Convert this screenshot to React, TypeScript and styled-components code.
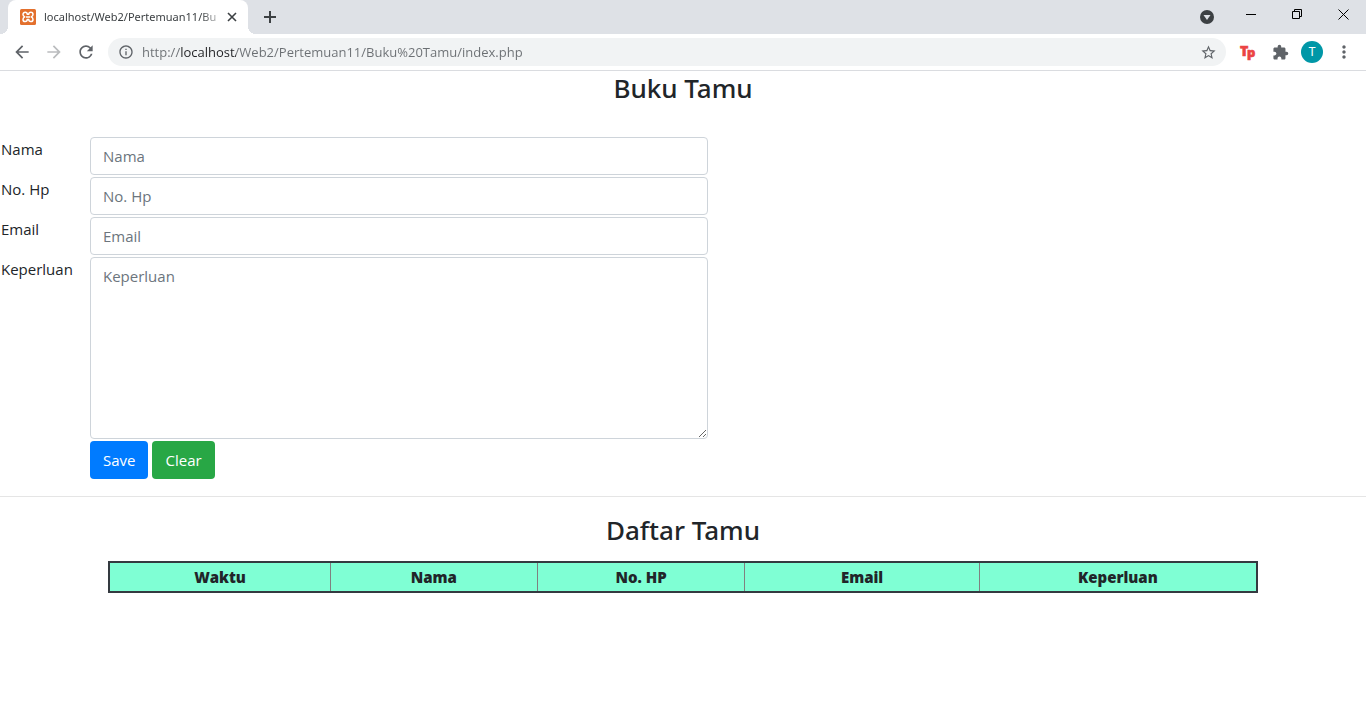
import React from "react";
import styled, { createGlobalStyle } from "styled-components";
import {
  MdArrowBack,
  MdArrowForward,
  MdRefresh,
  MdInfoOutline,
  MdStarBorder,
  MdExtension,
  MdMoreVert,
} from "react-icons/md";

const GlobalStyle = createGlobalStyle`
  *, *::before, *::after { box-sizing: border-box; }
  body {
    margin: 0;
    background: #fff;
    color: #212529;
    font-family: "Open Sans", "Noto Sans", sans-serif;
    font-size: 15px;
    line-height: 24px;
  }
`;

/* Browser frame */

const TabStrip = styled.div`
  display: flex;
  align-items: center;
  height: 34px;
  padding-left: 8px;
  background: #dee1e6;
`;

const Tab = styled.div`
  position: relative;
  display: flex;
  align-items: center;
  align-self: stretch;
  width: 240px;
  padding: 0 10px 0 12px;
  background: #fff;
  border-radius: 8px 8px 0 0;

  &::before,
  &::after {
    content: "";
    position: absolute;
    bottom: 0;
    width: 8px;
    height: 8px;
  }
  &::before {
    right: 100%;
    background: radial-gradient(circle at 0 0, #dee1e6 8px, #fff 8px);
  }
  &::after {
    left: 100%;
    background: radial-gradient(circle at 100% 0, #dee1e6 8px, #fff 8px);
  }
`;

const TabTitle = styled.span`
  flex: 1;
  min-width: 0;
  margin-left: 8px;
  white-space: nowrap;
  font-family: "Noto Sans", "Open Sans", sans-serif;
  font-size: 11px;
  line-height: 16px;
  color: #3c4043;
  mask-image: linear-gradient(to right, #000 86%, transparent);
`;

const IconButton = styled.button<{ $size?: number; $color?: string }>`
  display: flex;
  align-items: center;
  justify-content: center;
  flex: none;
  width: ${(p) => p.$size ?? 32}px;
  height: ${(p) => Math.min(p.$size ?? 32, 32)}px;
  padding: 0;
  border: 0;
  background: none;
  color: ${(p) => p.$color ?? "#5f6368"};
`;

const NewTab = styled(IconButton)`
  margin-left: 6px;
`;

const WindowControls = styled.div`
  display: flex;
  align-items: center;
  height: 28px;
  margin: 0 0 auto auto;
`;

const Toolbar = styled.div`
  display: flex;
  align-items: center;
  height: 37px;
  padding: 0 6px;
  border-bottom: 1px solid #dadce0;
  background: #fff;
`;

const AddressBar = styled.div`
  display: flex;
  align-items: center;
  flex: 1;
  height: 28px;
  margin: 0 6px;
  padding: 0 2px 0 10px;
  border-radius: 14px;
  background: #f1f3f4;
  color: #5f6368;
`;

const Address = styled.input`
  flex: 1;
  min-width: 0;
  height: 20px;
  margin-left: 8px;
  padding: 0;
  border: 0;
  outline: 0;
  font: 13px/20px "Open Sans", "Noto Sans", sans-serif;
  color: #5f6368;
  /* the host name is darker than the rest of the address */
  background: linear-gradient(to right, #6b6f73 38px, #202124 38px 94px, #6b6f73 94px);
  background-clip: text;
  -webkit-text-fill-color: transparent;
`;

const Avatar = styled.span`
  width: 22px;
  height: 22px;
  border-radius: 50%;
  background: #0097a7;
  color: #fff;
  font: 12px/22px Roboto, sans-serif;
  text-align: center;
`;

/* Page */

const Heading = styled.h3`
  margin: 0;
  font-family: "Noto Sans", "Open Sans", sans-serif;
  font-size: 26px;
  font-weight: 500;
  line-height: 34px;
  text-align: center;
`;

const GuestForm = styled.form`
  display: grid;
  grid-template-columns: 88px 1fr;
  gap: 2px 1px;
  max-width: 709px;
  margin-top: 32px;
  padding: 0 1px;
`;

const Label = styled.label`
  font-size: 15px;
`;

const fieldStyle = `
  display: block;
  width: 100%;
  padding: 6px 12px;
  border: 1px solid #ced4da;
  border-radius: 4px;
  background: #fff;
  color: #495057;
  font: 15px/24px "Open Sans", "Noto Sans", sans-serif;
  &::placeholder { color: #6c757d; opacity: 1; }
`;

const Field = styled.input`
  ${fieldStyle}
  height: 38px;
`;

const Area = styled.textarea`
  ${fieldStyle}
  height: 182px;
  resize: vertical;
`;

const Actions = styled.div`
  display: flex;
  grid-column: 2;
  gap: 4px;
`;

const Button = styled.button<{ $color: string }>`
  height: 38px;
  padding: 0 13px;
  border: 0;
  border-radius: 4px;
  background: ${(p) => p.$color};
  color: #fff;
  font: 15px/24px "Open Sans", "Noto Sans", sans-serif;
`;

const Divider = styled.hr`
  margin: 17px 0 16px;
  border: 0;
  border-top: 1px solid #e5e5e5;
`;

const GuestTable = styled.table`
  width: 100%;
  max-width: 1150px;
  margin: 14px auto 0;
  border: 2px solid #343a40;
  border-collapse: collapse;
  table-layout: fixed;
  background: #7fffd4;
`;

const HeadCell = styled.th<{ $share: number }>`
  width: ${(p) => p.$share}%;
  height: 30px;
  padding: 2px;
  border: 1px solid #808080;
  border-width: 0 1px;
  font-size: 15px;
  font-weight: 800;
  text-align: center;
`;

const fields = [
  { id: "nama", label: "Nama" },
  { id: "hp", label: "No. Hp" },
  { id: "email", label: "Email" },
];

const columns = [
  { title: "Waktu", share: 19.3 },
  { title: "Nama", share: 18 },
  { title: "No. HP", share: 18.1 },
  { title: "Email", share: 20.4 },
  { title: "Keperluan", share: 24.2 },
];

const XamppIcon = () => (
  <svg width="16" height="16" viewBox="0 0 16 16" fill="none">
    <rect width="16" height="16" rx="1.500" fill="#e3702d" />
    <path
      d="M4.800 7.900C3.400 7.300 3 6.500 3 5.500 3 4 4 3.300 5.200 3.300S7.200 4 7.200 5.200H8.800C8.800 4 9.600 3.300 10.800 3.300S13 4 13 5.500c0 1-.4 1.800-1.800 2.400C12.600 8.500 13 9.400 13 10.400c0 1.400-1 2.200-2.200 2.200S8.800 11.800 8.800 10.600H7.200C7.200 11.800 6.400 12.600 5.200 12.600S3 11.800 3 10.400C3 9.400 3.400 8.500 4.800 7.900ZM6 7.900h4"
      stroke="#fff"
      strokeWidth="1.500"
      strokeLinejoin="round"
    />
  </svg>
);

const TpIcon = () => (
  <svg
    width="20"
    height="24"
    fill="#eb4444"
    stroke="#eb4444"
    strokeWidth="0.600"
    fontFamily="Open Sans, sans-serif"
    fontWeight="800"
  >
    <text x="2" y="16" fontSize="14">T</text>
    <text x="9" y="17" fontSize="13">p</text>
  </svg>
);

export default function App() {
  return (
    <>
      <GlobalStyle />
      <header>
        <TabStrip>
          <Tab>
            <XamppIcon />
            <TabTitle>localhost/Web2/Pertemuan11/Bu</TabTitle>
            <IconButton $size={12} $color="#3c4043" aria-label="Close tab">
              <svg width="10" height="10" stroke="currentColor" strokeWidth="1.600">
                <path d="M1 1l8 8M9 1L1 9" />
              </svg>
            </IconButton>
          </Tab>
          <NewTab $color="#3c4043" aria-label="New tab">
            <svg width="12" height="12" stroke="currentColor" strokeWidth="2">
              <path d="M6 0v12M0 6h12" />
            </svg>
          </NewTab>
          <WindowControls>
            <IconButton $size={42} aria-label="Search tabs">
              <svg width="14" height="20">
                <circle cx="7" cy="13" r="7" fill="#3c4043" />
                <path d="M3.500 11h7L7 16z" fill="#dee1e6" />
              </svg>
            </IconButton>
            <IconButton $size={46} $color="#000" aria-label="Minimize">
              <svg width="10" height="10" stroke="currentColor">
                <path d="M0 5.500h10" />
              </svg>
            </IconButton>
            <IconButton $size={46} $color="#000" aria-label="Restore">
              <svg width="10" height="10" fill="none" stroke="currentColor">
                <path d="M.5 2.500h7v7h-7zM2.500 2.500v-2h7v7h-2" />
              </svg>
            </IconButton>
            <IconButton $size={46} $color="#000" aria-label="Close">
              <svg width="11" height="11" stroke="currentColor">
                <path d="M.5.5l10 10M10.500.5l-10 10" />
              </svg>
            </IconButton>
          </WindowControls>
        </TabStrip>
        <Toolbar>
          <IconButton aria-label="Back"><MdArrowBack size={20} /></IconButton>
          <IconButton $color="#babcbe" aria-label="Forward"><MdArrowForward size={20} /></IconButton>
          <IconButton aria-label="Reload"><MdRefresh size={20} /></IconButton>
          <AddressBar>
            <MdInfoOutline size={16} />
            <Address
              aria-label="Address"
              defaultValue="http://localhost/Web2/Pertemuan11/Buku%20Tamu/index.php"
            />
            <IconButton aria-label="Bookmark"><MdStarBorder size={17} /></IconButton>
          </AddressBar>
          <IconButton aria-label="Extension"><TpIcon /></IconButton>
          <IconButton aria-label="Extensions"><MdExtension size={17} /></IconButton>
          <IconButton aria-label="Profile"><Avatar>T</Avatar></IconButton>
          <IconButton aria-label="Menu"><MdMoreVert size={20} /></IconButton>
        </Toolbar>
      </header>
      <main>
        <Heading>Buku Tamu</Heading>
        <GuestForm>
          {fields.map((f) => (
            <React.Fragment key={f.id}>
              <Label htmlFor={f.id}>{f.label}</Label>
              <Field id={f.id} placeholder={f.label} />
            </React.Fragment>
          ))}
          <Label htmlFor="keperluan">Keperluan</Label>
          <Area id="keperluan" placeholder="Keperluan" />
          <Actions>
            <Button type="submit" $color="#007bff">Save</Button>
            <Button type="reset" $color="#28a745">Clear</Button>
          </Actions>
        </GuestForm>
        <Divider />
        <Heading>Daftar Tamu</Heading>
        <GuestTable>
          <thead>
            <tr>
              {columns.map((c) => (
                <HeadCell key={c.title} $share={c.share} scope="col">{c.title}</HeadCell>
              ))}
            </tr>
          </thead>
        </GuestTable>
      </main>
    </>
  );
}
